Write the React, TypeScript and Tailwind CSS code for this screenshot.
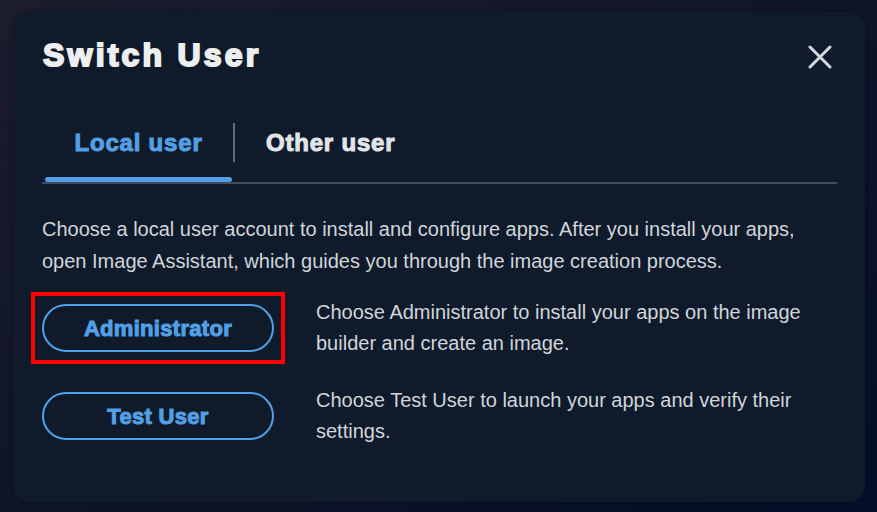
import { useState } from "react";

function CloseIcon() {
  return (
    <svg width="24" height="24" viewBox="0 0 24 24" fill="none" aria-hidden="true">
      <path d="M2 2L22 22M22 2L2 22" stroke="#d5d9de" strokeWidth="3" strokeLinecap="round" />
    </svg>
  );
}

const rows = [
  {
    label: "Administrator",
    text: "Choose Administrator to install your apps on the image builder and create an image.",
    highlighted: true,
  },
  {
    label: "Test User",
    text: "Choose Test User to launch your apps and verify their settings.",
    highlighted: false,
  },
];

export default function App() {
  const [tab, setTab] = useState<"local" | "other">("local");

  return (
    <div className="h-[512px] w-full overflow-hidden bg-gradient-to-br from-[#1d1e2e] via-[#10162a] to-[#040f29] pl-[13px] pt-[12px] font-['Liberation_Sans',Arial,sans-serif]">
      <div className="h-[490px] w-[852px] rounded-[16px] bg-[#0f1b2a] pl-[29px] pr-[28px] pt-[23px] shadow-[0_0_12px_rgba(0,0,0,0.35)]">
        <div className="flex h-[40px] items-center justify-between">
          <h1 className="pl-[1px] text-[32px] font-bold leading-none tracking-[3.2px] text-[#eceef0] [-webkit-text-stroke:2px_currentcolor]">
            Switch User
          </h1>
          <button className="mr-[5px] mt-[3px]">
            <CloseIcon />
          </button>
        </div>

        <div className="mt-[43px] flex items-start border-b-2 border-[#414d5c]">
          <button onClick={() => setTab("local")} className="ml-[3px] flex w-[187px] flex-col">
            <span
              className={`flex h-[49px] items-center justify-center text-[24px] font-bold tracking-[0.8px] [-webkit-text-stroke:1px_currentcolor] ${
                tab === "local" ? "text-[#539fe5]" : "text-[#e2e5e8]"
              }`}
            >
              Local user
            </span>
            <span className={`mt-[10px] h-[5px] rounded-full ${tab === "local" ? "bg-[#539fe5]" : "bg-transparent"}`} />
          </button>
          <div className="ml-[1px] mt-[5px] h-[39px] w-[2px] bg-[#5f6b7a]" />
          <button onClick={() => setTab("other")} className="flex flex-col">
            <span
              className={`flex h-[49px] items-center px-[31px] text-[24px] font-bold tracking-[0.8px] [-webkit-text-stroke:1px_currentcolor] ${
                tab === "other" ? "text-[#539fe5]" : "text-[#e2e5e8]"
              }`}
            >
              Other user
            </span>
            <span className={`mt-[10px] h-[5px] rounded-full ${tab === "other" ? "bg-[#539fe5]" : "bg-transparent"}`} />
          </button>
        </div>

        <p className="mt-[29px] max-w-[775px] text-[20px] leading-[32px] text-[#d1d5db]">
          Choose a local user account to install and configure apps. After you install your apps, open Image
          Assistant, which guides you through the image creation process.
        </p>

        <div className="mt-[20px] flex flex-col gap-[26px]">
          {rows.map((row) => (
            <div key={row.label} className="flex items-start gap-[42px]">
              <div className="relative mt-[7px] shrink-0">
                <button className="flex h-[48px] w-[232px] items-center justify-center rounded-full border-2 border-[#539fe5] text-[22px] font-bold tracking-[0.3px] text-[#539fe5] [-webkit-text-stroke:1px_currentcolor]">
                  {row.label}
                </button>
                {row.highlighted && (
                  <span className="pointer-events-none absolute -left-[11px] -top-[12px] h-[72px] w-[254px] border-4 border-[#ff0000]" />
                )}
              </div>
              <p className="flex-1 text-[20px] leading-[31px] text-[#d1d5db]">{row.text}</p>
            </div>
          ))}
        </div>
      </div>
    </div>
  );
}
